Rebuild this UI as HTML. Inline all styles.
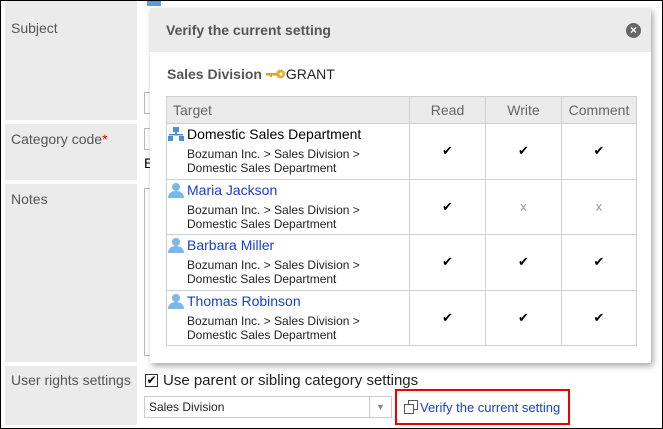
<!DOCTYPE html>
<html><head><style>
*{margin:0;padding:0;box-sizing:border-box}
body{width:663px;height:429px;overflow:hidden;background:#fff;font-family:"Liberation Sans",Arial,sans-serif;position:relative}
.frame{position:absolute;left:0;top:0;width:663px;height:429px;border:1px solid #000;z-index:50;pointer-events:none}
.lab{position:absolute;left:5px;width:132px;background:#ebebeb;color:#555;font-size:14px;padding:7px 6px}
.a{position:absolute}
.dlg{position:absolute;left:150px;top:8px;width:501px;height:355px;background:#fff;box-shadow:2px 3px 6px rgba(0,0,0,.35);z-index:10}
.hd{height:44px;background:#ebebeb;color:#555;font-weight:bold;font-size:14px;padding:14px 16px}
table{position:absolute;left:16px;top:88px;border-collapse:collapse;font-size:13px}
td,th{border:1px solid #d0d0d0;vertical-align:top}
th{background:#ebebeb;color:#666;font-weight:normal;height:27px;text-align:center;font-size:14px;vertical-align:middle}
td.c{text-align:center;vertical-align:middle;font-size:13px}
tr.r td{height:55.5px}
.nm{font-size:14px;display:flex;align-items:center;padding-top:2px}
.p{font-size:12px;color:#222;padding-left:20px;line-height:14px;margin-top:5px}
.lk{color:#1a3fcc}
.x{color:#999}
</style></head><body>
<div class="frame"></div>
<div class="lab" style="top:0;height:10px"></div>
<div class="a" style="left:147px;top:0;width:14px;height:6px;background:#5b9bd5"></div>
<div class="lab" style="top:13px;height:107px">Subject</div>
<div class="lab" style="top:124px;height:56px">Category code<span style="color:#e00">*</span></div>
<div class="lab" style="top:184px;height:178px">Notes</div>
<div class="lab" style="top:366px;height:59px;padding-top:6px">User rights settings</div>
<div class="a" style="left:144px;top:92px;width:12px;height:22px;border:1px solid #bbb"></div>
<div class="a" style="left:144px;top:128px;width:12px;height:22px;border:1px solid #bbb"></div>
<div class="a" style="left:144px;top:155px;font-size:14px">E</div>
<div class="a" style="left:144px;top:188px;width:506px;height:168px;border:1px solid #bbb"></div>
<div class="dlg">
<div class="hd">Verify the current setting</div>
<div class="a" style="left:476px;top:15px;width:15px;height:15px;border-radius:50%;background:#666;color:#fff;font-size:12px;font-weight:bold;text-align:center;line-height:15px">×</div>
<div class="a" style="left:17px;top:58px;font-size:14px;color:#555;display:flex;align-items:center"><b>Sales Division</b>&nbsp;<svg width="20" height="10" viewBox="0 0 20 10"><rect x="0" y="4" width="11" height="2.5" fill="#d9a520"/><rect x="4" y="6" width="2" height="2" fill="#d9a520"/><circle cx="14.5" cy="5" r="4.5" fill="#e0b030"/><circle cx="15" cy="5" r="1.5" fill="#fff"/></svg><span style="color:#222">GRANT</span></div>
<table>
<tr><th style="width:243px;text-align:left;padding-left:6px">Target</th><th style="width:76px">Read</th><th style="width:76px">Write</th><th style="width:75px">Comment</th></tr>
<tr class="r"><td><div class="nm"><svg width="18" height="14" viewBox="0 0 18 14"><rect x="6" y="0" width="6" height="5" fill="#4a90d9"/><rect x="8" y="5" width="2" height="3" fill="#4a90d9"/><rect x="2" y="7" width="14" height="1.5" fill="#4a90d9"/><rect x="1" y="9" width="5" height="5" fill="#4a90d9"/><rect x="12" y="9" width="5" height="5" fill="#4a90d9"/></svg><span style="margin-left:2px">Domestic Sales Department</span></div><div class="p">Bozuman Inc. &gt; Sales Division &gt;<br>Domestic Sales Department</div></td><td class="c">✔</td><td class="c">✔</td><td class="c">✔</td></tr>
<tr class="r"><td><div class="nm"><svg width="18" height="16" viewBox="0 0 18 16"><circle cx="9" cy="5" r="4" fill="#7ab8ea"/><path d="M1 16c0-5 4-7 8-7s8 2 8 7z" fill="#7ab8ea"/></svg><span class="lk" style="margin-left:2px">Maria Jackson</span></div><div class="p">Bozuman Inc. &gt; Sales Division &gt;<br>Domestic Sales Department</div></td><td class="c">✔</td><td class="c x">x</td><td class="c x">x</td></tr>
<tr class="r"><td><div class="nm"><svg width="18" height="16" viewBox="0 0 18 16"><circle cx="9" cy="5" r="4" fill="#7ab8ea"/><path d="M1 16c0-5 4-7 8-7s8 2 8 7z" fill="#7ab8ea"/></svg><span class="lk" style="margin-left:2px">Barbara Miller</span></div><div class="p">Bozuman Inc. &gt; Sales Division &gt;<br>Domestic Sales Department</div></td><td class="c">✔</td><td class="c">✔</td><td class="c">✔</td></tr>
<tr class="r"><td><div class="nm"><svg width="18" height="16" viewBox="0 0 18 16"><circle cx="9" cy="5" r="4" fill="#7ab8ea"/><path d="M1 16c0-5 4-7 8-7s8 2 8 7z" fill="#7ab8ea"/></svg><span class="lk" style="margin-left:2px">Thomas Robinson</span></div><div class="p">Bozuman Inc. &gt; Sales Division &gt;<br>Domestic Sales Department</div></td><td class="c">✔</td><td class="c">✔</td><td class="c">✔</td></tr>
</table>
</div>
<div class="a" style="left:145px;top:374px;width:13px;height:13px;border:1px solid #333;font-size:12px;line-height:11px;text-align:center">✔</div>
<div class="a" style="left:163px;top:372px;font-size:15px;color:#222">Use parent or sibling category settings</div>
<div class="a" style="left:144px;top:396px;width:248px;height:22px;border:1px solid #ccc;font-size:12px;padding:3px 4px;color:#222">Sales Division<span style="position:absolute;right:0;top:0;width:22px;height:20px;border-left:1px solid #ccc;color:#888;font-size:9px;text-align:center;line-height:20px">▼</span></div>
<div class="a" style="left:395px;top:389px;width:175px;height:36px;border:2px solid #e00"></div>
<svg class="a" style="left:404px;top:400px" width="14" height="14" viewBox="0 0 14 14"><rect x="4.5" y="0.5" width="9" height="9" fill="none" stroke="#555"/><rect x="0.5" y="4.5" width="9" height="9" fill="#fff" stroke="#555"/></svg>
<div class="a lk" style="left:420px;top:400px;font-size:13px">Verify the current setting</div>
</body></html>
